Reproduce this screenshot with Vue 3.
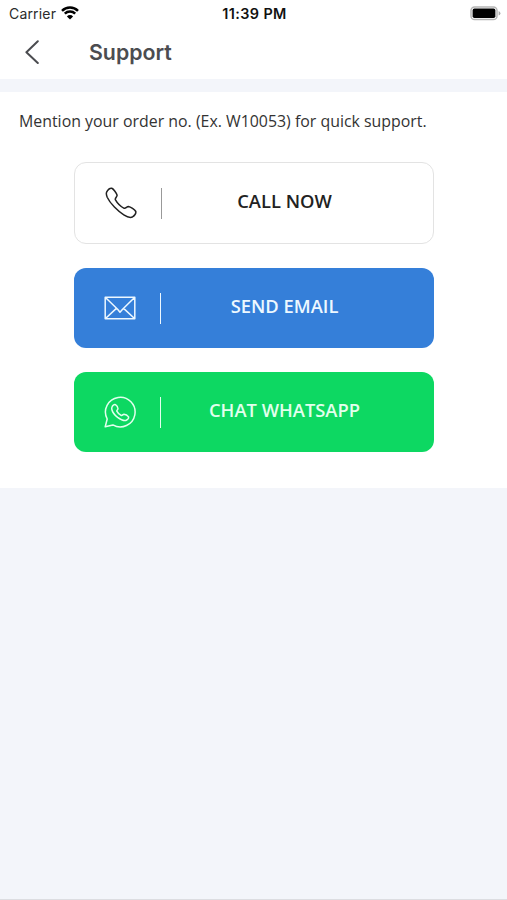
<script setup>
const actions = [
  { id: 'call', label: 'CALL NOW' },
  { id: 'email', label: 'SEND EMAIL' },
  { id: 'whatsapp', label: 'CHAT WHATSAPP' },
]
</script>

<template>
  <div class="screen">
    <header class="status">
      <div class="carrier">
        <span class="carrier-name">Carrier</span>
        <svg class="wifi" viewBox="0 0 18 14">
          <path d="M1 4.9A11.4 11.4 0 0 1 17 4.9" />
          <path d="M3.8 7.7A7.4 7.4 0 0 1 14.2 7.7" />
          <path class="solid" d="M5.9 10.4A4.4 4.4 0 0 1 12.1 10.4L9 13.5Z" />
        </svg>
      </div>
      <span class="clock">11:39 PM</span>
      <svg class="battery" viewBox="0 0 31 15">
        <rect x="1" y="1" width="26" height="12.6" rx="3.6" fill="#fff" stroke="#b5b5b5" stroke-width="1.5" />
        <rect x="2.6" y="2.6" width="22.8" height="9.4" rx="1.8" fill="#000" />
        <path d="M28.6 5v4.6q1.8-.7 1.8-2.3T28.6 5Z" fill="#aaa" />
      </svg>
    </header>
    <nav class="nav">
      <svg class="back" viewBox="0 0 14 24"><path d="M12.8 1.2 1.4 12.2 12.8 23" /></svg>
      <h1 class="title">Support</h1>
    </nav>
    <main class="panel">
      <p class="hint">Mention your order no. (Ex. W10053) for quick support.</p>
      <div class="actions">
        <button v-for="a in actions" :key="a.id" class="action" :class="a.id">
          <svg v-if="a.id === 'call'" class="icon" viewBox="0 0 32 32">
            <path d="M1.6 5.2C2.5 3.4 4.8 1.1 6.8 1.3C8.6 2 11.5 6.2 12.1 8.2C12.3 9.8 9.9 10.8 10.3 12.6C12 15.6 16.2 19.8 19.2 21.3C21 21.6 21.8 19.4 23.4 19.4C25.6 19.8 29.8 22.8 30.8 24.5C31.1 26.3 29.2 28.8 27.4 30C25.2 31 21.8 29.8 18.8 27.9C12.8 24.1 5.3 16.7 2.2 10.2C1.2 7.7 1 6.5 1.6 5.2Z" />
          </svg>
          <svg v-else-if="a.id === 'email'" class="icon" viewBox="0 0 32 32">
            <path d="M1.2 5.2h29.6v21.6H1.2ZM1.2 5.2 13.6 17.2 16 20.2 18.6 17.2 30.8 5.2M1.2 26.8 12.4 16.4M30.8 26.8 19.6 16.4" />
          </svg>
          <svg v-else class="icon" viewBox="0 0 32 32">
            <path d="M1.2 30.8 3.2 23A14.8 14.8 0 1 1 8.9 28.9Z" />
            <path d="M8 11C8.4 9.7 10.2 8.1 11.5 8.7C12.5 9.3 13.9 11.7 14 12.8C13.9 13.9 12.5 14.3 12.8 15.2C13.6 16.8 15.6 18.8 17.3 19.5C18.4 19.8 18.8 18.3 20 18.2C21.2 18.3 23.9 20 24.6 20.9C25 22.3 23.2 24 21.8 24.5C19.6 25 16.4 23.4 13.6 21.4C11 19.3 8.5 16.2 7.9 13.7C7.6 12.5 7.6 11.8 8 11Z" />
          </svg>
          <span class="divider"></span>
          <span class="label">{{ a.label }}</span>
        </button>
      </div>
    </main>
  </div>
</template>

<style>
body { margin: 0; }
</style>

<style scoped>
.screen {
  box-sizing: border-box;
  height: 900px;
  background: #f3f5fa;
  border-bottom: 1px solid #dcdde1;
  overflow: hidden;
}
.status {
  display: grid;
  grid-template-columns: 1fr auto 1fr;
  align-items: center;
  height: 27px;
  box-sizing: border-box;
  padding: 0 6px 0 9px;
  background: #fff;
  font-family: Inter, sans-serif;
  font-size: 14px;
  color: #111;
}
.carrier { display: flex; align-items: center; gap: 5px; }
.carrier-name { color: #2b2b2b; letter-spacing: 0.18px; }
.wifi { width: 18px; height: 14px; margin-top: -2px; fill: none; stroke: #000; stroke-width: 2.5; }
.wifi .solid { fill: #000; stroke: none; }
.clock { font-size: 14.4px; font-weight: 600; letter-spacing: 0.4px; margin-right: 1px; }
.battery { width: 31px; height: 15px; justify-self: end; }
.nav {
  display: flex;
  align-items: center;
  gap: 50px;
  height: 52px;
  box-sizing: border-box;
  padding: 0 0 2px 25px;
  background: #fff;
}
.back { width: 14px; height: 24px; fill: none; stroke: #4b4c50; stroke-width: 2; stroke-linecap: round; stroke-linejoin: round; }
.title { margin: 0; font: 600 21.3px/28px Inter, sans-serif; color: #4b4c50; }
.panel {
  height: 396px;
  margin-top: 13px;
  box-sizing: border-box;
  padding: 18px 0 0;
  background: #fff;
}
.hint { margin: 0 0 0 19px; height: 52px; font: 400 15.9px/22px "Open Sans", sans-serif; color: #333; white-space: nowrap; }
.actions { display: flex; flex-direction: column; gap: 24px; margin: 0 73px 0 74px; }
.action {
  display: flex;
  align-items: center;
  box-sizing: border-box;
  height: 80px;
  width: 360px;
  border: 0;
  border-radius: 12px;
  padding: 0 26px 0 30px;
  color: #edf8ff;
}
.call { height: 82px; border: 1.5px solid #e3e3e3; background: #fff; color: #222; }
.email { background: #357fd9; }
.whatsapp { background: #0dd862; color: #e2ffed; }
.icon { width: 32px; height: 32px; fill: none; stroke: currentColor; stroke-width: 1.5; stroke-linejoin: round; }
.divider { width: 1.5px; height: 31px; margin-left: 23.5px; background: currentColor; }
.call .divider { background: #999; }
.label { flex: 1; padding-bottom: 4px; text-align: center; font: 600 18.35px/24px "Open Sans", sans-serif; white-space: nowrap; }
</style>
